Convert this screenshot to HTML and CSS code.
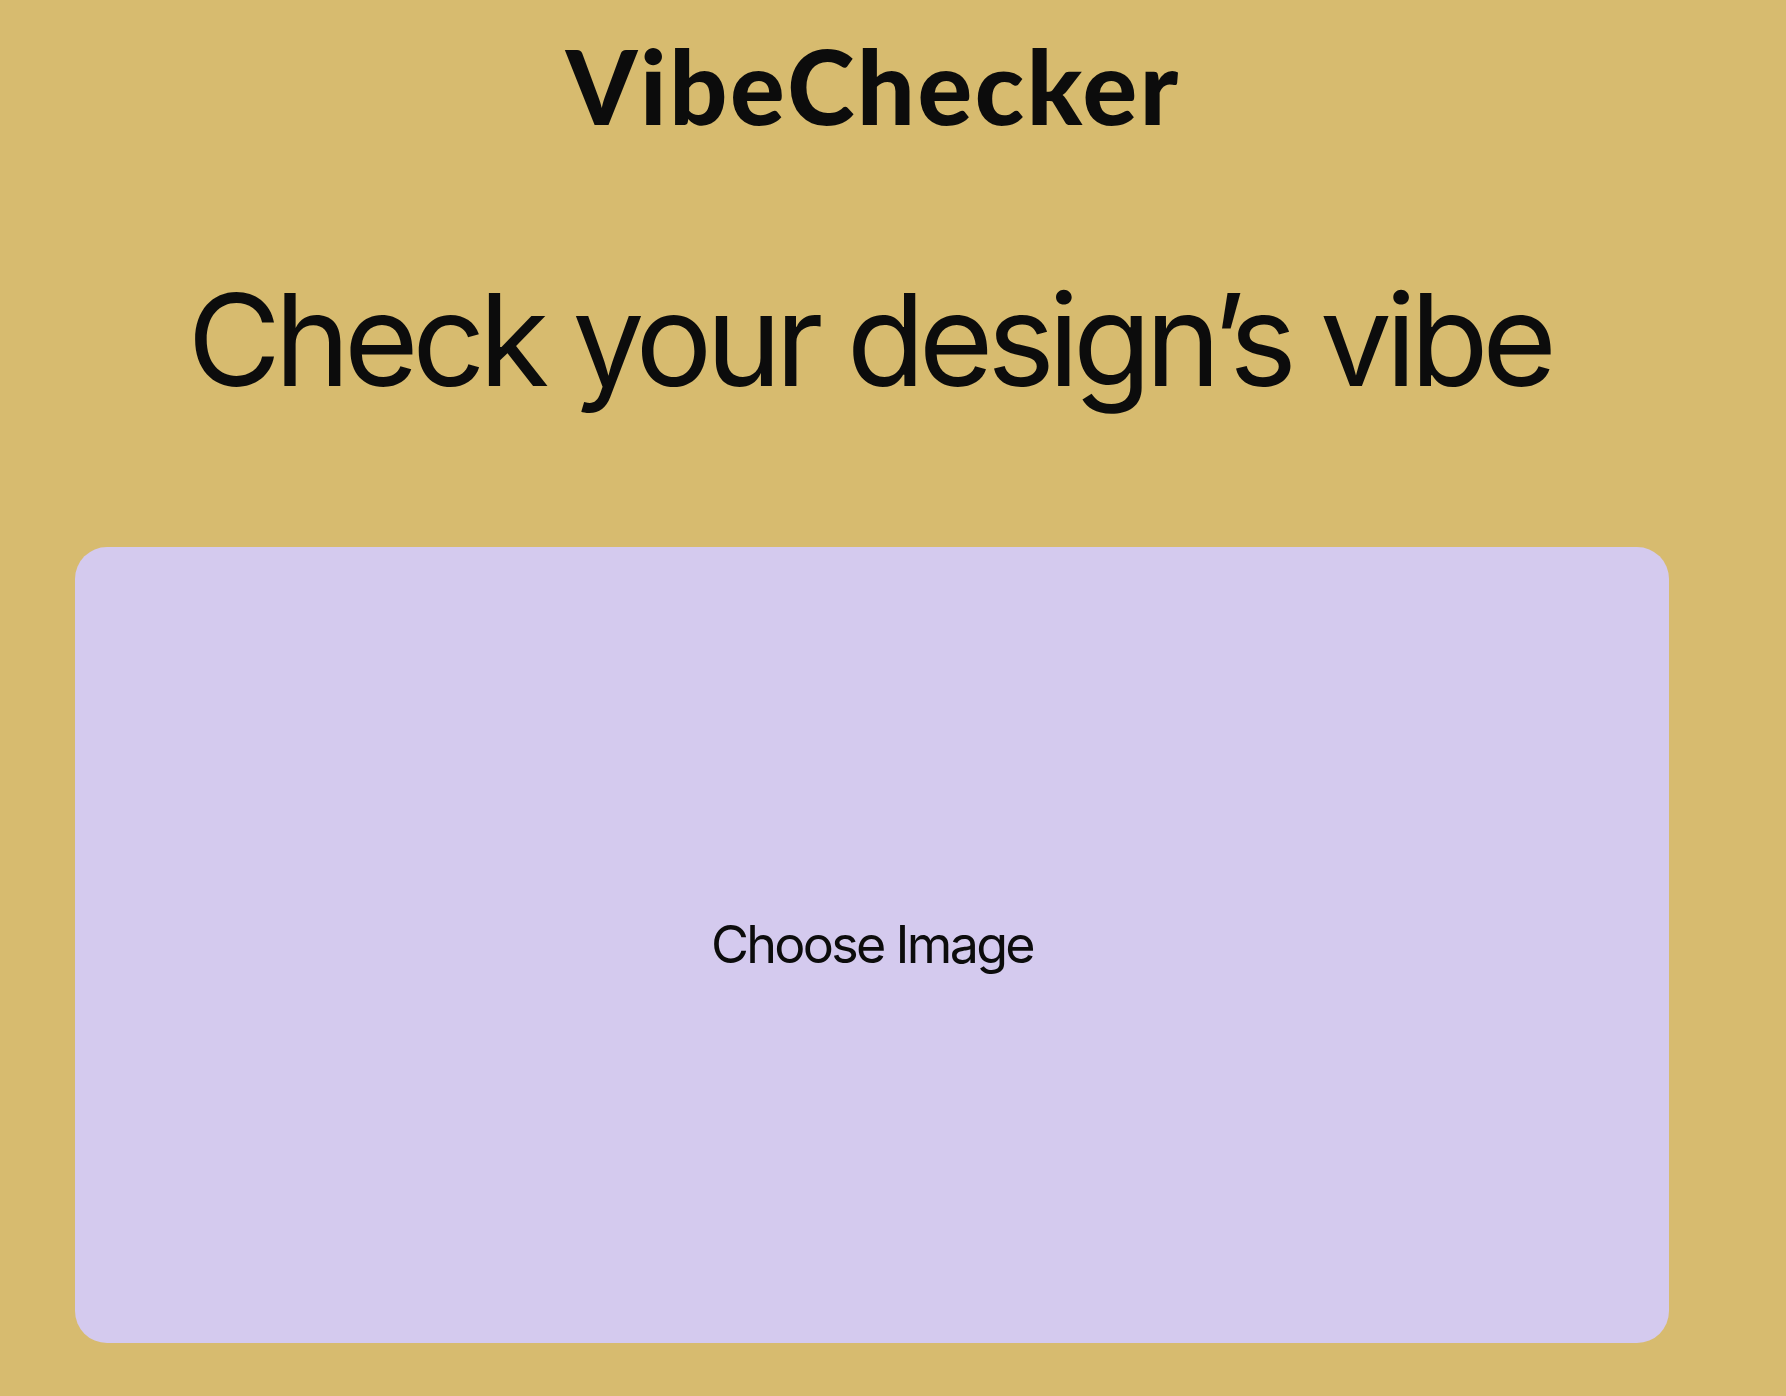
FILE: index.html
```html
<!DOCTYPE html>
<html lang="en">
<head>
<meta charset="utf-8">
<title>VibeChecker</title>
<link rel="stylesheet" href="styles.css">
</head>
<body>
<main class="page">
  <header class="brand">VibeChecker</header>
  <h1 class="headline">Check your design’s vibe</h1>
  <label class="dropzone">
    <span class="dropzone-label">Choose Image</span>
  </label>
</main>
</body>
</html>
```

FILE: styles.css
```css
html, body {
  margin: 0;
  padding: 0;
  background: #d7bb6f;
}

body {
  color: #0c0c0c;
  font-family: "Inter", "Liberation Sans", sans-serif;
  height: 1396px;
  overflow: hidden;
}

.page {
  width: 1744px;
  display: flex;
  flex-direction: column;
  align-items: center;
  padding-top: 35px;
}

.brand {
  font-family: "Lato", "Open Sans", sans-serif;
  font-weight: 900;
  font-size: 102px;
  line-height: 1;
  letter-spacing: 2.6px;
  text-indent: 2.6px;
}

.headline {
  margin: 139px 0 0;
  font-weight: 400;
  font-size: 128px;
  line-height: 1;
  letter-spacing: -6.35px;
  text-indent: -6px;
}

.dropzone {
  margin-top: 143px;
  width: 1594px;
  height: 796px;
  background: #d4caee;
  border-radius: 32px;
  display: flex;
  align-items: center;
  justify-content: center;
  cursor: pointer;
}

.dropzone-label {
  font-size: 52px;
  line-height: 1;
  font-weight: 400;
  letter-spacing: -2.7px;
}
```
